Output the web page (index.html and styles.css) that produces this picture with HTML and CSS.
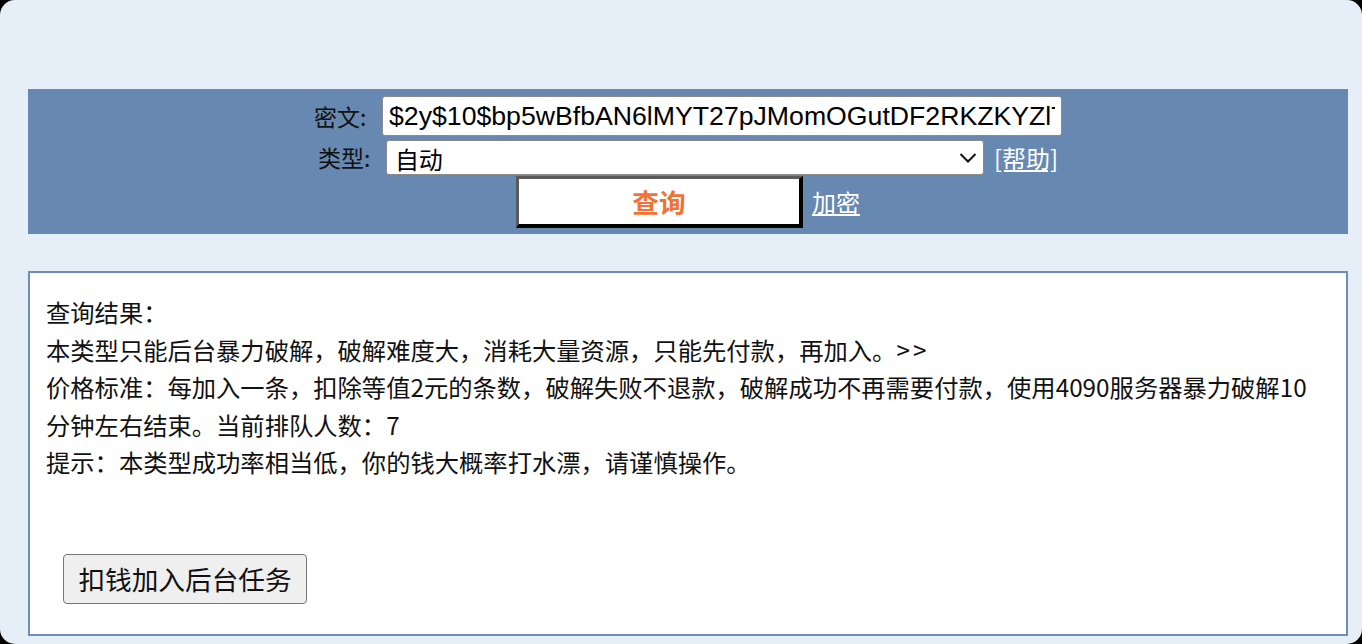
FILE: index.html
```html
<!DOCTYPE html>
<html lang="zh-CN">
<head>
<meta charset="utf-8">
<title>查询</title>
<link rel="stylesheet" href="styles.css">
</head>
<body>
<div class="page">
  <form class="search-bar">
    <div class="row row-cipher">
      <label class="label" for="cipher">密文:</label>
      <input class="cipher-input" id="cipher" type="text" value="$2y$10$bp5wBfbAN6lMYT27pJMomOGutDF2RKZKYZlT8a">
    </div>
    <div class="row row-type">
      <label class="label" for="type">类型:</label>
      <span class="select-wrap">
        <select class="type-select" id="type">
          <option>自动</option>
        </select>
        <svg class="chevron" width="18" height="12" viewBox="0 0 18 12" aria-hidden="true">
          <path d="M1.5 2 L9 9.5 L16.5 2" fill="none" stroke="#111" stroke-width="2"/>
        </svg>
      </span>
      <a class="link" href="#">[帮助]</a>
    </div>
    <div class="row row-submit">
      <button class="query-btn" type="button">查询</button>
      <a class="link" href="#">加密</a>
    </div>
  </form>

  <div class="result">
    <div class="lines">
      <p>查询结果：</p>
      <p>本类型只能后台暴力破解，破解难度大，消耗大量资源，只能先付款，再加入。<span class="gt">&gt;&gt;</span></p>
      <p>价格标准：每加入一条，扣除等值2元的条数，破解失败不退款，破解成功不再需要付款，使用4090服务器暴力破解10分钟左右结束。当前排队人数：7</p>
      <p>提示：本类型成功率相当低，你的钱大概率打水漂，请谨慎操作。</p>
    </div>
    <div class="actions">
      <button class="task-btn" type="button">扣钱加入后台任务</button>
    </div>
  </div>
</div>
</body>
</html>
```
FILE: styles.css
```css
html {
  background: #000;
}
body {
  margin: 0;
  height: 644px;
  overflow: hidden;
  background: #e6eef8;
  border-radius: 15px;
  font-family: "Noto Sans CJK SC", "Noto Sans", sans-serif;
  color: #111;
}
.page {
  padding: 89px 14px 0 28px;
}
.search-bar {
  background: #6788b0;
  padding: 7px 0 6px;
  display: flex;
  flex-direction: column;
}
.row {
  display: flex;
  justify-content: center;
  align-items: center;
}
.row-cipher {
  gap: 10px;
  height: 40px;
}
.row-type {
  gap: 10px;
  height: 35px;
  margin-top: 4px;
}
.row-submit {
  gap: 9px;
  height: 52px;
  margin-top: 1px;
}
.label {
  font-size: 23px;
  line-height: 1;
  width: 58px;
  color: #111;
}
.cipher-input {
  box-sizing: border-box;
  width: 680px;
  height: 40px;
  margin: 0;
  padding: 0 6px;
  border: 1px solid #8a8a8a;
  border-radius: 3px;
  font-family: "Liberation Sans", Arial, sans-serif;
  font-size: 26.67px;
  color: #000;
  background: #fff;
}
.select-wrap {
  position: relative;
  display: block;
  width: 598px;
  height: 35px;
}
.type-select {
  -webkit-appearance: none;
  appearance: none;
  box-sizing: border-box;
  width: 598px;
  height: 35px;
  margin: 0;
  padding: 0 30px 0 8px;
  border: 1px solid #8a8a8a;
  border-radius: 3px;
  font-family: "Noto Sans CJK SC", sans-serif;
  font-size: 24px;
  color: #000;
  background: #fff;
}
.chevron {
  position: absolute;
  right: 7px;
  top: 12px;
  pointer-events: none;
}
.link {
  color: #fff;
  font-size: 24px;
  line-height: 1;
  text-decoration: underline;
}
.query-btn {
  box-sizing: border-box;
  width: 287px;
  height: 52px;
  margin: 0;
  padding: 0;
  background: #fff;
  border-style: solid;
  border-width: 3px 4px 4px 3px;
  border-color: #5a5a5a #000 #000 #5a5a5a;
  color: #f07234;
  font-family: "Noto Sans CJK SC", sans-serif;
  font-size: 26.67px;
  font-weight: bold;
}
.result {
  box-sizing: border-box;
  height: 365px;
  margin-top: 37px;
  background: #fff;
  border: 2px solid #6f8cc2;
  padding: 20px 20px 30px 16px;
}
.lines p {
  margin: 0;
  font-size: 24.3px;
  line-height: 37.5px;
}
.gt {
  letter-spacing: 3px;
}
.actions {
  margin-top: 73px;
  padding-left: 17px;
}
.task-btn {
  box-sizing: border-box;
  width: 244px;
  height: 50px;
  margin: 0;
  padding: 0;
  background: #efefef;
  border: 1px solid #767676;
  border-radius: 4px;
  font-family: "Noto Sans CJK SC", sans-serif;
  font-size: 26.67px;
  color: #111;
}
```
